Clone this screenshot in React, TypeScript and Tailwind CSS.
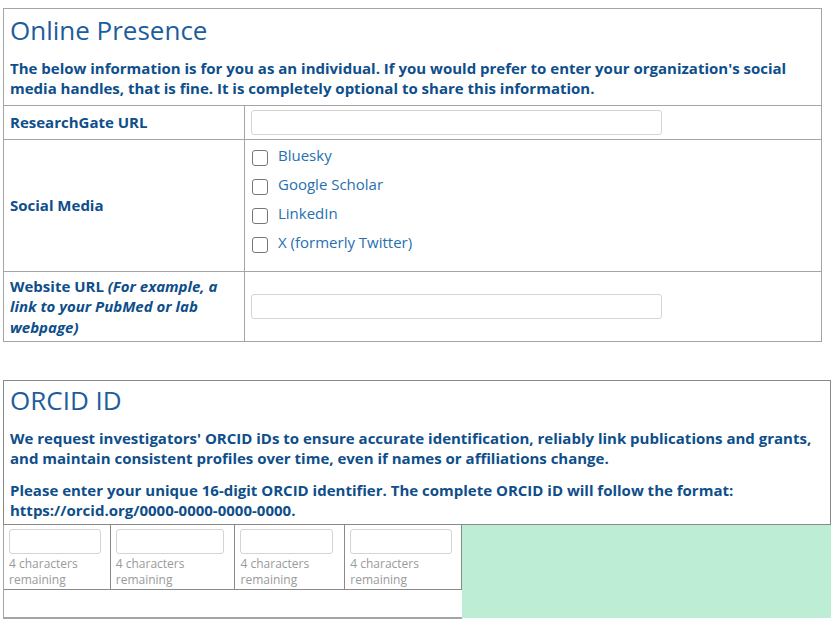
import React from "react";

const socials = ["Bluesky", "Google Scholar", "LinkedIn", "X (formerly Twitter)"];

function OrcidCell({ width, inputWidth }: { width: string; inputWidth: string }) {
    return (
        <div className={`${width} border-r border-[#8a8a8a] pl-[5px] pt-[4px]`}>
            <div className={`h-[25px] ${inputWidth} rounded-[3px] border border-[#d4d4d4] bg-white`}></div>
            <div className="mt-[2px] text-[12px] leading-[16px] text-[#9a9a9a]">
                4 characters
                <br />
                remaining
            </div>
        </div>
    );
}

export default function App() {
    return (
        <div className="min-h-screen bg-white pt-[8px] font-['Open_Sans',sans-serif] text-[#0e4e8a]">
            {/* Online Presence */}
            <div className="ml-[3px] w-[819px] border border-[#a5a5a5]">
                <div className="h-[97px] border-b border-[#a5a5a5] px-[6px]">
                    <h2 className="pt-[3px] text-[26px] leading-[36px] font-normal text-[#1d5d9b]">
                        Online Presence
                    </h2>
                    <p className="mt-[10px] text-[15px] leading-[20px] font-bold">
                        The below information is for you as an individual. If you would prefer to enter your organization's social
                        media handles, that is fine. It is completely optional to share this information.
                    </p>
                </div>

                <div className="flex h-[34px] border-b border-[#a5a5a5]">
                    <div className="flex w-[241px] items-center border-r border-[#a5a5a5] px-[6px] text-[15px] font-bold">
                        ResearchGate URL
                    </div>
                    <div className="flex items-center px-[6px]">
                        <div className="h-[25px] w-[411px] rounded-[3px] border border-[#d4d4d4]"></div>
                    </div>
                </div>

                <div className="flex h-[132px] border-b border-[#a5a5a5]">
                    <div className="flex w-[241px] items-center border-r border-[#a5a5a5] px-[6px] text-[15px] font-bold">
                        Social Media
                    </div>
                    <div className="flex flex-col gap-[9px] px-[7px] pt-[5px]">
                        {socials.map((s) => (
                            <label key={s} className="flex h-[20px] items-center gap-[10px] text-[15px] text-[#2670b0]">
                                <span className="mt-[5px] h-[16px] w-[16px] rounded-[3px] border border-[#777] bg-white"></span>
                                {s}
                            </label>
                        ))}
                    </div>
                </div>

                <div className="flex h-[69px]">
                    <div className="flex w-[241px] items-center border-r border-[#a5a5a5] px-[6px] text-[15px] leading-[20.5px] font-bold">
                        <div>
                            Website URL <i>(For example, a link to your PubMed or lab webpage)</i>
                        </div>
                    </div>
                    <div className="flex items-center px-[6px]">
                        <div className="h-[25px] w-[411px] rounded-[3px] border border-[#d4d4d4]"></div>
                    </div>
                </div>
            </div>

            {/* ORCID ID */}
            <div className="mt-[38px] ml-[3px] w-[828px]">
                <div className="h-[145px] border border-[#8a8a8a] px-[6px]">
                    <h2 className="pt-[2px] text-[26px] leading-[34px] font-normal text-[#1d5d9b]">ORCID ID</h2>
                    <p className="mt-[11px] text-[15px] leading-[20px] font-bold">
                        We request investigators' ORCID iDs to ensure accurate identification, reliably link publications and grants,
                        and maintain consistent profiles over time, even if names or affiliations change.
                    </p>
                    <p className="mt-[12px] text-[15px] leading-[20px] font-bold">
                        Please enter your unique 16-digit ORCID identifier. The complete ORCID iD will follow the format:
                        https://orcid.org/0000-0000-0000-0000.
                    </p>
                </div>
                <div className="flex">
                    <div className="w-[459px] border-b-2 border-l border-[#a5a5a5]">
                        <div className="flex h-[65px] border-b border-[#8a8a8a]">
                            <OrcidCell width="w-[107px]" inputWidth="w-[92px]" />
                            <OrcidCell width="w-[125px]" inputWidth="w-[108px]" />
                            <OrcidCell width="w-[110px]" inputWidth="w-[93px]" />
                            <OrcidCell width="w-[117px]" inputWidth="w-[102px]" />
                        </div>
                        <div className="h-[27px]"></div>
                    </div>
                    <div className="h-[93px] flex-1 bg-[#bdedd5]"></div>
                </div>
            </div>
        </div>
    );
}
